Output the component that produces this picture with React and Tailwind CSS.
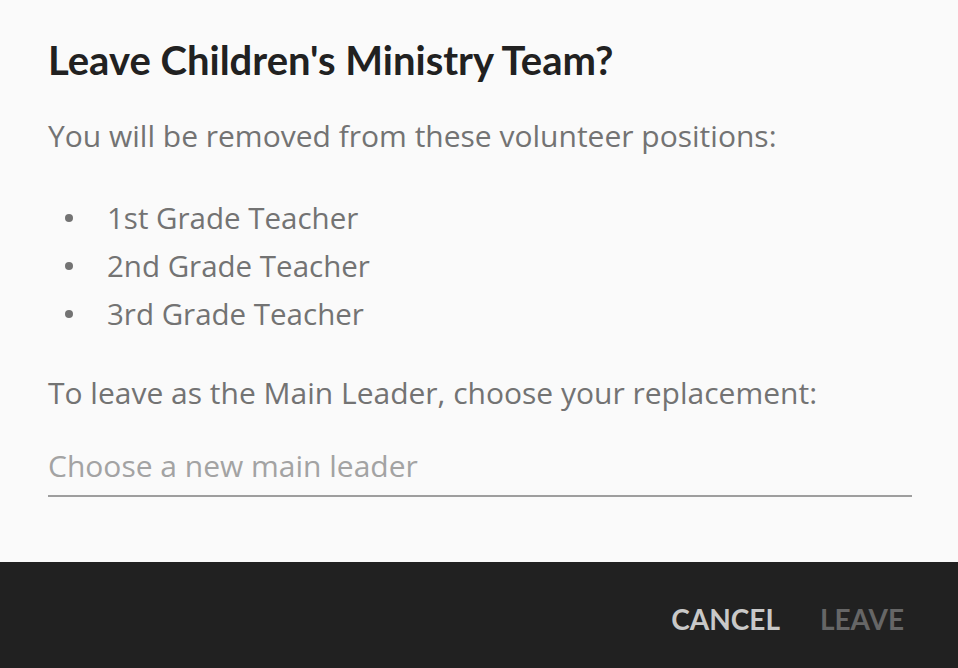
import React from 'react';

const positions = ['1st Grade Teacher', '2nd Grade Teacher', '3rd Grade Teacher'];

const body = { fontFamily: '"Open Sans", Lato, sans-serif' };

export default function App() {
  return (
    <div
      className="w-[958px] h-[668px] flex flex-col bg-[#fafafa]"
      style={{ fontFamily: 'Lato, "Open Sans", sans-serif' }}
    >
      {/* Body */}
      <div className="flex-1 px-[48px] pt-[38px]">
        <h3 className="text-[40px] leading-[44px] font-bold text-[#212121]">
          Leave Children's Ministry Team?
        </h3>

        <p className="mt-[38px] text-[30px] leading-[32px] text-[#737373]" style={body}>
          You will be removed from these volunteer positions:
        </p>

        <ul className="mt-[42px]" style={body}>
          {positions.map(p => (
            <li key={p} className="flex items-center h-[48px] text-[29.5px] text-[#737373]">
              <span className="w-[8px] h-[8px] rounded-full bg-[#737373] ml-[17px] mr-[34px]"></span>
              {p}
            </li>
          ))}
        </ul>

        <p className="mt-[39px] text-[30px] leading-[32px] text-[#737373]" style={body}>
          To leave as the Main Leader, choose your replacement:
        </p>

        <div className="mt-[41px] w-[864px] pb-[13px] border-b-2 border-[#9e9e9e]">
          <span className="block text-[30px] leading-[32px] text-[#a3a3a3]" style={body}>
            Choose a new main leader
          </span>
        </div>
      </div>

      {/* Footer */}
      <div className="h-[106px] bg-[#212121] flex items-center justify-end pr-[54px] pt-[8px] gap-[40px]">
        <button type="button" className="text-[28px] font-bold text-[#c8c8c8]">
          CANCEL
        </button>
        <button type="button" className="text-[28px] font-bold text-[#666666]">
          LEAVE
        </button>
      </div>
    </div>
  );
}
